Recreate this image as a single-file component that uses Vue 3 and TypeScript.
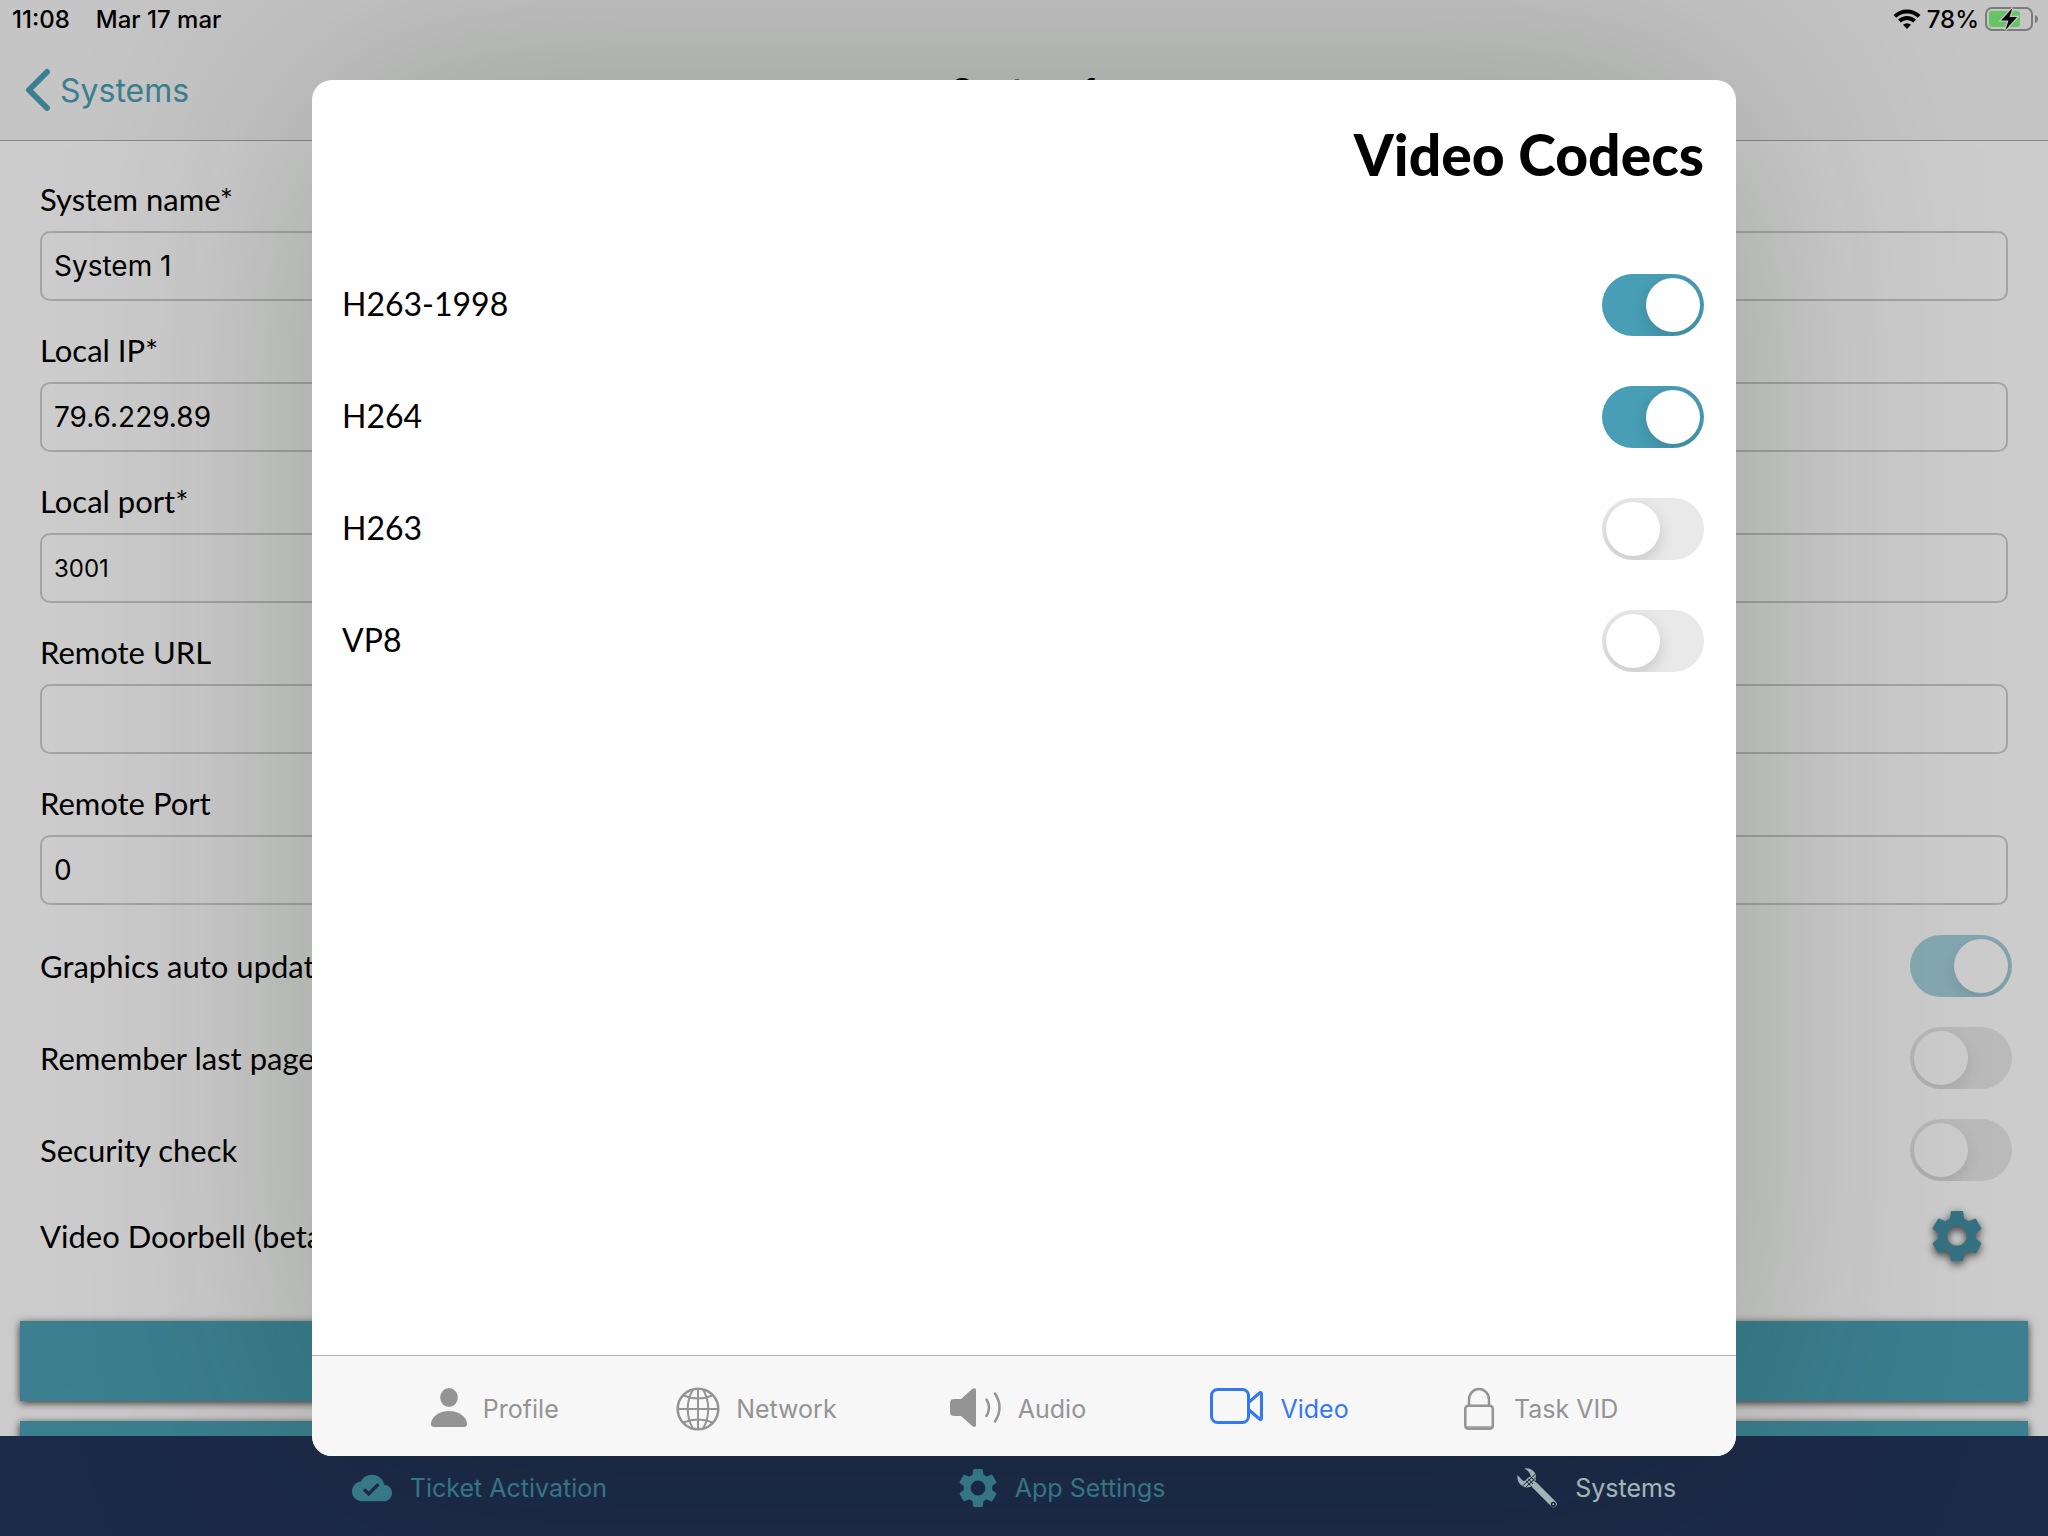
<script setup lang="ts">
import { ref } from 'vue'

interface Field { id: string; label: string; value: string; small?: boolean }
interface Toggle { id: string; label: string; on: boolean }

const fields = ref<Field[]>([
  { id: 'system-name', label: 'System name*', value: 'System 1' },
  { id: 'local-ip', label: 'Local IP*', value: '79.6.229.89' },
  { id: 'local-port', label: 'Local port*', value: '3001', small: true },
  { id: 'remote-url', label: 'Remote URL', value: '' },
  { id: 'remote-port', label: 'Remote Port', value: '0' },
])

const options = ref<Toggle[]>([
  { id: 'auto-update', label: 'Graphics auto update', on: true },
  { id: 'last-page', label: 'Remember last page', on: false },
  { id: 'security', label: 'Security check', on: false },
])

const codecs = ref<Toggle[]>([
  { id: 'h263-1998', label: 'H263-1998', on: true },
  { id: 'h264', label: 'H264', on: true },
  { id: 'h263', label: 'H263', on: false },
  { id: 'vp8', label: 'VP8', on: false },
])

const gearBody =
  'M19.43 12.98c.04-.32.07-.64.07-.98s-.03-.66-.07-.98l2.11-1.65c.19-.15.24-.42.12-.64l-2-3.46c-.12-.22-.39-.3-.61-.22l-2.49 1c-.52-.4-1.08-.73-1.69-.98l-.38-2.65C14.46 2.18 14.25 2 14 2h-4c-.25 0-.46.18-.49.42l-.38 2.65c-.61.25-1.17.59-1.69.98l-2.49-1c-.23-.09-.49 0-.61.22l-2 3.46c-.13.22-.07.49.12.64l2.11 1.65c-.04.32-.07.65-.07.98s.03.66.07.98l-2.11 1.65c-.19.15-.24.42-.12.64l2 3.46c.12.22.39.3.61.22l2.49-1c.52.4 1.08.73 1.69.98l.38 2.65c.03.24.24.42.49.42h4c.25 0 .46-.18.49-.42l.38-2.65c.61-.25 1.17-.59 1.69-.98l2.49 1c.23.09.49 0 .61-.22l2-3.46c.12-.22.07-.49-.12-.64z'
const gear = gearBody + 'M15.9 12a3.9 3.9 0 1 0-7.8 0a3.9 3.9 0 1 0 7.8 0z'
</script>

<template>
  <div class="page">
    <header class="top">
      <div class="status">
        <span>11:08</span>
        <span>Mar 17 mar</span>
        <div class="status-right">
          <svg width="28" height="20" viewBox="0 0 28 20" fill="none" stroke="#000" stroke-width="4">
            <path d="M1.8 7.4A17.4 17.4 0 0 1 26.2 7.4" />
            <path d="M6.4 12.2A10.8 10.8 0 0 1 21.6 12.2" />
            <path d="M14 20l-4-4.2a5.8 5.8 0 0 1 8 0z" fill="#000" stroke="none" />
          </svg>
          <span>78%</span>
          <svg width="54" height="26" viewBox="0 0 54 26">
            <rect x="1" y="2" width="46" height="22" rx="6" fill="none" stroke="#7b7b7b" stroke-width="2" />
            <path d="M50 9v8q3-1 3-4t-3-4z" fill="#7b7b7b" />
            <rect x="4" y="5" width="31" height="16" rx="3" fill="#66c466" />
            <path d="M27.500 2L16 14.500h7.500L20.500 24 32 11h-7.500z" fill="#000" stroke="#c5c5c5" stroke-width="2.500" paint-order="stroke" />
          </svg>
        </div>
      </div>
      <div class="nav">
        <a href="#" class="back">
          <svg width="26" height="44" viewBox="0 0 26 44" fill="none" stroke="currentColor" stroke-width="6" stroke-linecap="round" stroke-linejoin="round">
            <path d="M23 4L5 22L23 40" />
          </svg>
          Systems
        </a>
        <h1>System 1</h1>
        <span></span>
      </div>
    </header>

    <main class="content">
      <form class="form" @submit.prevent>
        <div v-for="f in fields" :key="f.id" class="field">
          <label :for="f.id">{{ f.label }}</label>
          <input :id="f.id" v-model="f.value" type="text" :class="{ small: f.small }" />
        </div>
        <div class="options">
          <div v-for="o in options" :key="o.id" class="option">
            <label :for="o.id">{{ o.label }}</label>
            <input :id="o.id" v-model="o.on" type="checkbox" class="switch faded" />
          </div>
          <div class="option doorbell">
            <span>Video Doorbell (beta)</span>
            <button type="button" class="gear" aria-label="Video Doorbell settings">
              <svg width="50" height="50" viewBox="2 2 20 20"><path :d="gear" fill="currentColor" fill-rule="evenodd" /></svg>
            </button>
          </div>
        </div>
        <div class="actions">
          <button type="submit" aria-label="Save"></button>
          <button type="button" aria-label="Delete"></button>
        </div>
      </form>
    </main>

    <nav class="tabs">
      <a href="#">
        <svg width="40" height="28" viewBox="0 3.600 24 16.800" fill="currentColor">
          <path d="M19.350 10.040C18.670 6.590 15.640 4 12 4 9.110 4 6.600 5.640 5.350 8.040 2.340 8.360 0 10.910 0 14c0 3.310 2.690 6 6 6h13c2.760 0 5-2.240 5-5 0-2.640-2.050-4.780-4.650-4.960zM10 17l-3.500-3.500 1.410-1.410L10 14.170 15.180 9l1.410 1.410L10 17z" />
        </svg>
        Ticket Activation
      </a>
      <a href="#">
        <svg width="38" height="38" viewBox="2 2 20 20"><path :d="gear" fill="currentColor" fill-rule="evenodd" /></svg>
        App Settings
      </a>
      <a href="#" class="current">
        <svg width="40" height="40" viewBox="0 0 40 40">
          <path d="M18 17.500L36.500 36" stroke="currentColor" stroke-width="6.500" stroke-linecap="round" />
          <path d="M7.500 0.500C13-.5 19 3 19 9.500c0 6-4 10-9.500 10C3.500 19-.5 13 .5 7l5.500 6q3 0 4.500-3l3-1.500q.5-4-6-8z" fill="currentColor" />
          <path d="M5.500 18L18 6.500M8.500 19.500L19 9.500M11 10.500l5 5.500M13.500 8.500l4.500 5M9 12.500l4.500 5" stroke="#1a283f" stroke-width="1" />
          <circle cx="36.300" cy="36.300" r="1.800" fill="currentColor" stroke="#1a283f" stroke-width="1.500" />
        </svg>
        Systems
      </a>
    </nav>

    <div class="backdrop">
      <section class="modal" role="dialog" aria-labelledby="modal-title">
        <h2 id="modal-title">Video Codecs</h2>
        <div class="codecs">
          <div v-for="c in codecs" :key="c.id" class="codec">
            <label :for="c.id">{{ c.label }}</label>
            <input :id="c.id" v-model="c.on" type="checkbox" class="switch" />
          </div>
        </div>
        <nav class="modal-tabs">
          <a href="#">
            <svg width="36" height="44" viewBox="0 0 36 44" fill="currentColor">
              <ellipse cx="18" cy="10.500" rx="8.800" ry="9.500" />
              <path d="M3 40q-3 0-3-3C0 30 8 24 18 24s18 6 18 13q0 3-3 3z" />
            </svg>
            Profile
          </a>
          <a href="#">
            <svg width="44" height="44" viewBox="0 0 44 44" fill="none" stroke="currentColor" stroke-width="2">
              <circle cx="22" cy="22" r="20.300" stroke-width="2.500" />
              <path d="M22 2v40M2 22h40M7.500 8.500Q22 14.500 36.500 8.500M7.500 35.500Q22 29.500 36.500 35.500" />
              <path d="M17 2.500C10 14 10 30 17 41.500M27 2.500C34 14 34 30 27 41.500" />
            </svg>
            Network
          </a>
          <a href="#">
            <svg width="52" height="44" viewBox="0 0 52 44">
              <path d="M4 12h7L22.500 1.800Q26 0 26 3v35q0 3-3.500 1.200L11 29H4q-4 0-4-4v-9q0-4 4-4z" fill="currentColor" />
              <path d="M36.500 12.500q5 8 0 16.500M45 6.500q9 14 0 28" fill="none" stroke="currentColor" stroke-width="2.500" stroke-linecap="round" />
            </svg>
            Audio
          </a>
          <a href="#" class="current">
            <svg width="54" height="44" viewBox="0 0 54 44" fill="none" stroke="currentColor" stroke-width="3" stroke-linejoin="round">
              <rect x="1.500" y="2.500" width="37" height="33" rx="6" />
              <path d="M38.500 15.500L49.500 6q2-1.500 2 1v24q0 2.500-2 1L38.500 22.500" />
            </svg>
            Video
          </a>
          <a href="#">
            <svg width="34" height="44" viewBox="0 0 34 44" fill="none" stroke="currentColor" stroke-width="2.500">
              <rect x="1.300" y="18.800" width="27.500" height="23" rx="3" />
              <path d="M5 18.500V12.500a10 10.500 0 0 1 20 0V18.500" />
              <path d="M2 40h26" stroke-width="1.500" />
            </svg>
            Task VID
          </a>
        </nav>
      </section>
    </div>
  </div>
</template>

<style>
body {
  background: #fff;
}
</style>

<style scoped>
.page,
.page * {
  box-sizing: border-box;
}

.page {
  --ui: Inter, "Liberation Sans", sans-serif;
  --text: Lato, "Open Sans", sans-serif;
  --teal: #4a9fb5;
  position: relative;
  display: flex;
  flex-direction: column;
  height: 100vh;
  overflow: hidden;
  background: #fff;
  color: #000;
  font-family: var(--text);
  font-size: 31px;
}

a {
  color: inherit;
  text-decoration: none;
}

button {
  padding: 0;
  border: 0;
  background: none;
}

svg {
  display: block;
  flex: none;
}

.top {
  border-bottom: 1px solid #a9a9a9;
  background: #f7f7f7;
  font-family: var(--ui);
}

.status {
  position: relative;
  z-index: 2;
  display: flex;
  align-items: center;
  gap: 26px;
  height: 40px;
  padding: 0 9px 2px 12px;
  font-size: 24px;
  font-weight: 500;
}

.status-right {
  display: flex;
  align-items: center;
  gap: 6px;
  margin-left: auto;
}

.nav {
  display: grid;
  grid-template-columns: 1fr auto 1fr;
  align-items: center;
  height: 100px;
  padding: 0 24px;
}

.back {
  display: flex;
  align-items: center;
  gap: 10px;
  color: var(--teal);
  font-size: 32px;
}

h1 {
  margin: 0;
  font-size: 34px;
  font-weight: 600;
}

.content {
  flex: 1;
  min-height: 0;
  overflow: hidden;
  padding: 36px 20px 0;
}

.field {
  display: flex;
  flex-direction: column;
  gap: 10px;
  margin: 0 20px 27px;
}

.field label {
  line-height: 44px;
}

.field input {
  width: 100%;
  height: 70px;
  padding: 0 12px;
  border: 2px solid #ccc;
  border-radius: 10px;
  background: transparent;
  color: #000;
  font-family: var(--ui);
  font-size: 28px;
}

.field input.small {
  font-size: 24px;
}

.options {
  display: flex;
  flex-direction: column;
  gap: 30px;
  padding: 3px 16px 0 20px;
}

.option {
  display: flex;
  align-items: center;
  justify-content: space-between;
}

.doorbell {
  padding-right: 30px;
}

.gear {
  color: #418fa3;
  filter: drop-shadow(0 3px 4px rgba(0, 0, 0, 0.7));
}

.switch {
  position: relative;
  flex: none;
  width: 102px;
  height: 62px;
  margin: 0;
  overflow: hidden;
  border-radius: 31px;
  appearance: none;
  background: #e9e9e9;
}

.switch::before {
  content: "";
  position: absolute;
  top: 4px;
  left: 4px;
  width: 54px;
  height: 54px;
  border-radius: 50%;
  background: #fff;
  box-shadow: 0 6px 16px rgba(0, 0, 0, 0.15);
}

.switch:checked {
  background: #479eb5;
}

.switch:checked::before {
  left: 44px;
}

.switch.faded:checked {
  background: #a6d2dd;
}

.switch.faded::before {
  box-shadow: 0 6px 16px rgba(0, 0, 0, 0.1);
}

.actions {
  display: flex;
  flex-direction: column;
  gap: 20px;
  padding-top: 60px;
}

.actions button {
  height: 80px;
  background: var(--teal);
  box-shadow: 0 2px 8px rgba(30, 15, 15, 0.8);
}

.tabs {
  position: relative;
  display: flex;
  align-items: center;
  justify-content: space-evenly;
  height: 100px;
  padding: 4px 20px 0 0;
  background: #25365d;
  color: var(--teal);
  font-family: var(--ui);
  font-size: 25px;
}

.tabs a {
  display: flex;
  align-items: center;
  gap: 18px;
}

.tabs .current {
  color: #ddf5fc;
}

.backdrop {
  position: absolute;
  inset: 0;
  display: flex;
  justify-content: center;
  padding: 80px 24px;
  background: rgba(0, 0, 0, 0.2);
}

.modal {
  display: flex;
  flex-direction: column;
  width: 100%;
  max-width: 1424px;
  overflow: hidden;
  border-radius: 20px;
  background: #fff;
  box-shadow: 0 0 300px rgba(0, 24, 0, 0.24);
}

h2 {
  margin: 0;
  padding: 42px 32px 0;
  font-size: 57px;
  font-weight: 900;
  line-height: 64px;
  text-align: right;
}

.codecs {
  display: flex;
  flex: 1;
  flex-direction: column;
  gap: 50px;
  padding: 88px 32px 0 30px;
  font-size: 32px;
}

.codec {
  display: flex;
  align-items: center;
  justify-content: space-between;
}

.codec label {
  padding-bottom: 3px;
}

.modal-tabs {
  display: flex;
  align-items: center;
  height: 101px;
  padding: 6px 64px 0 52px;
  border-top: 1px solid #b0b0b0;
  background: #f7f7f7;
  color: #949494;
  font-family: var(--ui);
  font-size: 25px;
}

.modal-tabs a {
  display: flex;
  flex: 1;
  align-items: center;
  justify-content: center;
  gap: 16px;
}

.modal-tabs .current {
  color: #3478f6;
}
</style>
